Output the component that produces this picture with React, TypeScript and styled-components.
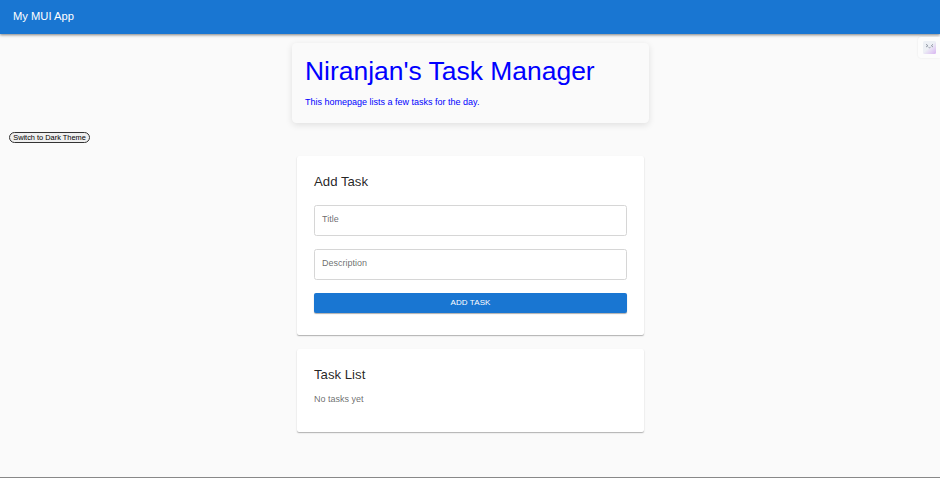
import React from "react";
import styled, { createGlobalStyle } from "styled-components";

const GlobalStyle = createGlobalStyle`
  * { box-sizing: border-box; }
  body {
    margin: 0;
    background: #fafafa;
    font-family: "Liberation Sans", Arial, sans-serif;
    color: rgba(0, 0, 0, 0.87);
  }
`;

const Page = styled.div`
  position: relative;
  height: 478px;
  overflow: hidden;
  display: flex;
  flex-direction: column;
  border-bottom: 1px solid #888;
`;

const AppBar = styled.header`
  flex: none;
  height: 34px;
  padding: 0 13px 3px;
  display: flex;
  align-items: center;
  background: #1976d2;
  color: #fff;
  font-size: 11.2px;
  box-shadow: 0 1px 2px rgba(0, 0, 0, 0.32), 0 2px 3px rgba(0, 0, 0, 0.14);
`;

const Banner = styled.section`
  flex: none;
  width: 357px;
  height: 80px;
  margin: 8.5px 0 0 292px;
  padding: 13px 13px 0;
  border-radius: 4.5px;
  color: #00f;
  box-shadow: 0 2px 7px rgba(0, 0, 0, 0.11);
`;

const BannerTitle = styled.h1`
  margin: 0;
  font-weight: 400;
  font-size: 26.45px;
  line-height: 31px;
  white-space: nowrap;
`;

const BannerText = styled.p`
  margin: 9px 0 0;
  font-size: 9px;
  line-height: 13px;
`;

const ThemeButton = styled.button`
  flex: none;
  width: 81px;
  height: 11px;
  margin: 9.5px 0 0 9px;
  padding: 0;
  border: 1px solid #333;
  border-radius: 6px;
  background: #efefef;
  color: #000;
  font: 7.4px/9px "Liberation Sans", Arial, sans-serif;
  white-space: nowrap;
`;

const Card = styled.section<{ $height: number; $gap: number }>`
  flex: none;
  width: 347px;
  height: ${(p) => p.$height}px;
  margin: ${(p) => p.$gap}px 0 0 297px;
  padding: 17.4px 17px;
  border-radius: 2px;
  background: #fff;
  box-shadow: 0 1px 1px rgba(0, 0, 0, 0.22), 0 1px 2px rgba(0, 0, 0, 0.1);
`;

const CardTitle = styled.h2`
  margin: 0;
  font-weight: 400;
  font-size: 13.2px;
  line-height: 18px;
`;

const Field = styled.div<{ $gap: number }>`
  height: 31px;
  margin-top: ${(p) => p.$gap}px;
  padding: 0 7px 2px;
  display: flex;
  align-items: center;
  border: 1px solid #d6d6d6;
  border-radius: 2.5px;
  color: rgba(0, 0, 0, 0.6);
  font-size: 9px;
`;

const SubmitButton = styled.button`
  display: block;
  width: 100%;
  height: 20px;
  margin-top: 13px;
  padding: 0 0 1px;
  border: 0;
  border-radius: 2px;
  background: #1976d2;
  color: #fff;
  font: 8px/19px "Liberation Sans", Arial, sans-serif;
  letter-spacing: 0.1px;
  text-transform: uppercase;
  box-shadow: 0 1px 1px rgba(0, 0, 0, 0.32);
`;

const Empty = styled.p`
  margin: 9px 0 0;
  color: rgba(0, 0, 0, 0.6);
  font-size: 9px;
  line-height: 13px;
`;

const AssistantTab = styled.aside`
  position: absolute;
  top: 37px;
  right: 0;
  width: 22px;
  height: 21px;
  padding: 4px 0 0 5px;
  border-radius: 3px 0 0 3px;
  background: #fcfcfc;
  box-shadow: 0 0 2px rgba(0, 0, 0, 0.09);
  svg { display: block; }
`;

const AssistantIcon = () => (
  <svg width="13" height="13" viewBox="0 0 13 13" fill="none">
    <defs>
      <linearGradient id="tile" x1="3" y1="2" x2="13" y2="13" gradientUnits="userSpaceOnUse">
        <stop offset="0.35" stopColor="#edf0f5" />
        <stop offset="1" stopColor="#d9b5f2" />
      </linearGradient>
    </defs>
    <rect width="13" height="13" rx="1.5" fill="url(#tile)" />
    <path d="M3 3.3l2 1.4-2 1.3M10 3.3L8.3 4.7l1.7 1.3M5.5 6.3q1 .9 2 0" stroke="#8a919e" strokeWidth="0.9" />
  </svg>
);

export default function App() {
  return (
    <>
      <GlobalStyle />
      <Page>
        <AppBar>My MUI App</AppBar>
        <Banner>
          <BannerTitle>Niranjan's Task Manager</BannerTitle>
          <BannerText>This homepage lists a few tasks for the day.</BannerText>
        </Banner>
        <ThemeButton>Switch to Dark Theme</ThemeButton>
        <Card $height={179.4} $gap={12.6}>
          <CardTitle>Add Task</CardTitle>
          <Field $gap={14}>Title</Field>
          <Field $gap={13}>Description</Field>
          <SubmitButton>Add Task</SubmitButton>
        </Card>
        <Card $height={83} $gap={14}>
          <CardTitle>Task List</CardTitle>
          <Empty>No tasks yet</Empty>
        </Card>
        <AssistantTab>
          <AssistantIcon />
        </AssistantTab>
      </Page>
    </>
  );
}
